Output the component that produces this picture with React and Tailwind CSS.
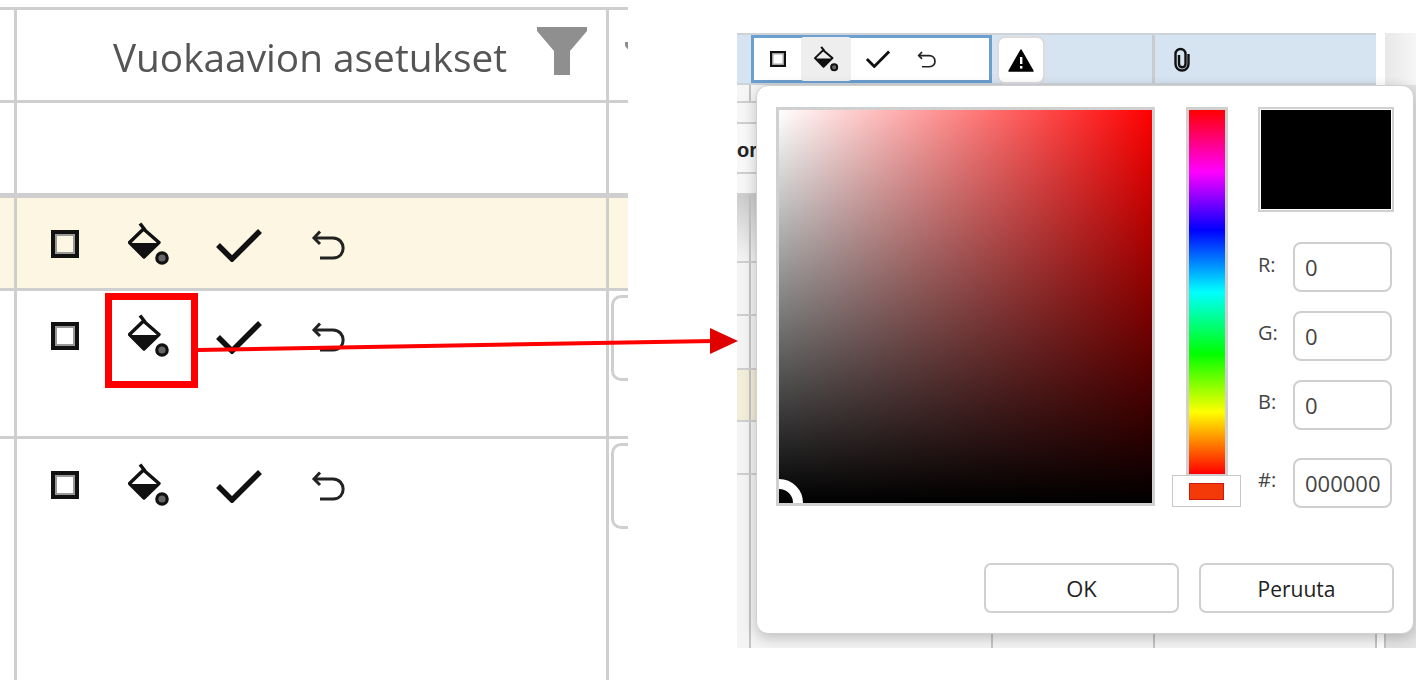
const lineCol = "border-[#cfcfcf]";

function SquareIcon({ className }) {
  return (
    <svg viewBox="0 0 28 28" className={className}>
      <rect x="2" y="2" width="24" height="24" fill="none" stroke="#111" strokeWidth="4" />
      <rect x="5" y="5" width="18" height="18" fill="none" stroke="#999" strokeWidth="2" />
    </svg>
  );
}

function BucketIcon({ className }) {
  return (
    <svg viewBox="0 0 42 44" className={className}>
      <path d="M12 1.5 L17 8" stroke="#111" strokeWidth="3.5" fill="none" />
      <path d="M15.5 7 L31 20.5 L16 35 L1.5 20.5 Z" fill="none" stroke="#111" strokeWidth="3.4" strokeLinejoin="round" />
      <path d="M3 21 H29.5 L16 34.5 Z" fill="#111" />
      <circle cx="34" cy="36" r="5.2" fill="#666" stroke="#111" strokeWidth="3.2" />
    </svg>
  );
}

function CheckIcon({ className }) {
  return (
    <svg viewBox="0 0 46 34" className={className}>
      <path d="M2 17 L16 31 L44 3" fill="none" stroke="#111" strokeWidth="5.5" />
    </svg>
  );
}

function UndoIcon({ className }) {
  return (
    <svg viewBox="0 0 34 30" className={className}>
      <path d="M3 8 H22 C35 8 36 28 22 28 H9" fill="none" stroke="#222" strokeWidth="3" />
      <path d="M9 1.5 L3 8 L9 14" fill="none" stroke="#222" strokeWidth="3" />
    </svg>
  );
}

function FunnelIcon({ className }) {
  return (
    <svg viewBox="0 0 50 48" className={className}>
      <path d="M0 0 H50 V4 L33 24 V48 H17 V24 L0 4 Z" fill="#8f8f8f" />
    </svg>
  );
}

function LargeTools({ pt }) {
  return (
    <div className={`flex items-start ${pt}`}>
      <SquareIcon className="ml-[34px] mt-[8px] h-[28px] w-[28px] blur-[0.4px]" />
      <BucketIcon className="ml-[49px] h-[44px] w-[42px] blur-[0.4px]" />
      <CheckIcon className="ml-[46px] mt-[6px] h-[34px] w-[46px] blur-[0.3px]" />
      <UndoIcon className="ml-[49px] mt-[8px] h-[30px] w-[34px] blur-[0.3px]" />
    </div>
  );
}

function LeftTable() {
  return (
    <div className="flex h-[680px] w-[628px] flex-none flex-col overflow-hidden bg-white pt-[7px]">
      <div className={`flex h-[96px] flex-none border-y-[3px] ${lineCol}`}>
        <div className={`w-[17px] flex-none border-r-[3px] ${lineCol}`} />
        <div className={`flex w-[592px] flex-none items-center justify-end border-r-[3px] pr-[19px] ${lineCol}`}>
          <span className="mt-[5px] text-[38.8px] leading-none text-[#555555] [font-family:'Open_Sans',sans-serif] blur-[0.4px]">Vuokaavion asetukset</span>
          <FunnelIcon className="mb-[8px] ml-[30px] h-[48px] w-[50px] blur-[0.4px]" />
        </div>
        <div className="flex-1 overflow-hidden pl-[16px] pt-[32px]">
          <FunnelIcon className="h-[48px] w-[50px]" />
        </div>
      </div>
      <div className={`flex h-[95px] flex-none border-b-[5px] ${lineCol}`}>
        <div className={`w-[17px] flex-none border-r-[3px] ${lineCol}`} />
        <div className={`w-[592px] flex-none border-r-[3px] ${lineCol}`} />
      </div>
      <div className={`flex h-[93px] flex-none border-b-[3px] bg-[#fdf6e3] ${lineCol}`}>
        <div className={`w-[17px] flex-none border-r-[3px] ${lineCol}`} />
        <div className={`w-[592px] flex-none border-r-[3px] ${lineCol}`}>
          <LargeTools pt="pt-[24px]" />
        </div>
      </div>
      <div className={`flex h-[148px] flex-none border-b-[3px] ${lineCol}`}>
        <div className={`w-[17px] flex-none border-r-[3px] ${lineCol}`} />
        <div className={`w-[592px] flex-none border-r-[3px] ${lineCol}`}>
          <LargeTools pt="pt-[23px]" />
        </div>
        <div className="flex-1 pl-[2px] pt-[4px]">
          <div className={`h-[86px] w-[40px] rounded-l-[10px] border-[3px] ${lineCol}`} />
        </div>
      </div>
      <div className="flex flex-1">
        <div className={`w-[17px] flex-none border-r-[3px] ${lineCol}`} />
        <div className={`w-[592px] flex-none border-r-[3px] ${lineCol}`}>
          <LargeTools pt="pt-[24px]" />
        </div>
        <div className="flex-1 pl-[2px] pt-[4px]">
          <div className={`h-[86px] w-[40px] rounded-l-[10px] border-[3px] ${lineCol}`} />
        </div>
      </div>
    </div>
  );
}

function Field({ label, value, mt, pt }) {
  return (
    <div className={`flex items-start ${mt}`}>
      <span className={`w-[35px] text-[20px] leading-[28px] text-[#444] [font-family:'Open_Sans',sans-serif] ${pt}`}>{label}</span>
      <div className="flex h-[50px] w-[99px] items-center rounded-[8px] border-2 border-[#cfcfcf] pl-[10px] text-[22px] text-[#444] [font-family:'Open_Sans',sans-serif]">
        {value}
      </div>
    </div>
  );
}

function ColorPopup() {
  return (
    <div className="absolute left-[19px] top-[52px] flex h-[549px] w-[658px] flex-col rounded-[12px] border border-[#d0d0d0] bg-white px-[19px] pt-[21px] shadow-[0_4px_14px_rgba(0,0,0,0.22)]">
      <div className="flex items-start">
        <div className="relative h-[399px] w-[379px] flex-none overflow-hidden border-[3px] border-[#d0d0d0]">
          <div className="absolute inset-0 bg-[linear-gradient(to_right,#fff,#f00)]" />
          <div className="absolute inset-0 bg-[linear-gradient(to_bottom,rgba(0,0,0,0),#000)]" />
          <div className="absolute bottom-[-24px] left-[-24px] h-[48px] w-[48px] rounded-full border-[10px] border-white" />
        </div>
        <div className="relative ml-[17px] flex h-[400px] w-[69px] flex-none justify-center">
          <div className="h-[370px] w-[42px] border-[3px] border-[#d0d0d0] bg-[linear-gradient(to_bottom,#f00,#f0f_17%,#00f_33%,#0ff_50%,#0f0_67%,#ff0_83%,#f00)]" />
          <div className="absolute bottom-0 left-0 flex h-[32px] w-[69px] items-center justify-center border border-[#c8c8c8] bg-white">
            <div className="h-[17px] w-[35px] border border-[#cc1a10] bg-[#f53a0a]" />
          </div>
        </div>
        <div className="ml-[17px] flex w-[134px] flex-none flex-col">
          <div className="h-[105px] w-[136px] border-2 border-[#d0d0d0] bg-white p-[1px]">
            <div className="h-full w-full bg-black" />
          </div>
          <Field label="R:" value="0" mt="mt-[30px]" pt="pt-[9px]" />
          <Field label="G:" value="0" mt="mt-[19px]" pt="pt-[8px]" />
          <Field label="B:" value="0" mt="mt-[19px]" pt="pt-[8px]" />
          <Field label="#:" value="000000" mt="mt-[28px]" pt="pt-[8px]" />
        </div>
      </div>
      <div className="mt-[55px] flex justify-end gap-[20px]">
        <div className="flex h-[50px] w-[195px] items-center justify-center rounded-[7px] border-2 border-[#d0d0d0] text-[22px] text-[#222] [font-family:'Open_Sans',sans-serif]">OK</div>
        <div className="flex h-[50px] w-[195px] items-center justify-center rounded-[7px] border-2 border-[#d0d0d0] pt-[4px] text-[21px] text-[#222] [font-family:'Open_Sans',sans-serif]">Peruuta</div>
      </div>
    </div>
  );
}

function StripRow({ h, line, bg, children }) {
  return (
    <div className={`flex flex-none border-b-2 border-[#cfcfcf] ${h} ${bg}`}>
      {line ? <div className="w-[14px] flex-none border-r-2 border-[#c4c4c4]" /> : children}
    </div>
  );
}

function RightShot() {
  return (
    <div className="relative ml-[109px] mt-[33px] h-[615px] w-[679px] flex-none overflow-hidden bg-white">
      <div className="flex h-[52px] items-stretch">
        <div className="flex flex-1 border-y-2 border-[#cdd3d9] bg-[#d6e3f0]">
          <div className="w-[14px] flex-none" />
          <div className="flex w-[241px] flex-none items-center border-[3px] border-[#6a9fcf] bg-white pl-[16px]">
            <SquareIcon className="h-[16px] w-[16px]" />
            <div className="ml-[15px] flex h-[44px] w-[50px] items-center justify-center rounded-[3px] bg-[#eeeeee]">
              <BucketIcon className="h-[26px] w-[25px]" />
            </div>
            <CheckIcon className="ml-[14px] h-[18px] w-[26px]" />
            <UndoIcon className="ml-[26px] h-[19px] w-[19px]" />
          </div>
          <div className="ml-[5px] mt-[1px] flex h-[48px] w-[48px] flex-none items-center justify-center rounded-[8px] border-2 border-[#dcdcdc] bg-white">
            <svg viewBox="0 0 26 23" className="h-[23px] w-[26px]">
              <path d="M13 1 L25 22 H1 Z" fill="#000" stroke="#000" strokeWidth="1.5" strokeLinejoin="round" />
              <rect x="12" y="8" width="2.4" height="7" fill="#fff" />
              <rect x="12" y="17" width="2.4" height="2.6" fill="#fff" />
            </svg>
          </div>
          <div className="w-[110px] flex-none border-r-[3px] border-[#c8ccd0]" />
          <div className="flex flex-1 items-center pl-[18px]">
            <svg viewBox="0 0 18 25" className="h-[25px] w-[18px]">
              <path d="M15.5 7 V17 A6.5 6.5 0 0 1 2.5 17 V7 A5 5 0 0 1 12.5 7 V17 A3 3 0 0 1 6 17 V8" fill="none" stroke="#111" strokeWidth="2.4" />
            </svg>
          </div>
        </div>
        <div className="w-[9px] flex-none bg-white" />
        <div className="w-[31px] flex-none bg-[linear-gradient(to_right,#e8e8e8,#f6f6f6)]" />
      </div>
      <div className="flex h-[563px] bg-[#f4f4f4]">
        <div className="flex w-[19px] flex-none flex-col">
          <StripRow h="h-[18px]" line bg="bg-[#f6f6f6]" />
          <StripRow h="h-[21px]" bg="bg-[#f6f6f6]" />
          <StripRow h="h-[50px]" bg="bg-[#f8f8f8]">
            <span className="mt-[4px] self-center text-[20px] font-semibold leading-none text-[#222] [font-family:'Liberation_Sans',sans-serif]">or</span>
          </StripRow>
          <StripRow h="h-[21px]" bg="bg-[#f6f6f6]" />
          <StripRow h="h-[68px]" line bg="bg-[linear-gradient(to_bottom,#cccccc,#f4f4f4)]" />
          <StripRow h="h-[53px]" line bg="bg-[#f4f4f4]" />
          <StripRow h="h-[54px]" line bg="bg-[#f4f4f4]" />
          <StripRow h="h-[52px]" line bg="bg-[#f3eeda]" />
          <StripRow h="h-[53px]" line bg="bg-[#f4f4f4]" />
          <div className="flex flex-1">
            <div className="w-[14px] flex-none border-r-2 border-[#c4c4c4]" />
          </div>
        </div>
        <div className="w-[237px] flex-none border-r-2 border-[#c4c4c4]" />
        <div className="w-[162px] flex-none border-r-2 border-[#c4c4c4]" />
        <div className="w-[222px] flex-none border-r-2 border-[#c4c4c4]" />
        <div className="w-[9px] flex-none border-r-2 border-[#c4c4c4] bg-white" />
        <div className="flex-1 bg-[#e4e4e4]" />
      </div>
      <ColorPopup />
    </div>
  );
}

export default function App() {
  return (
    <div className="relative flex h-[680px] w-[1416px] items-start overflow-hidden bg-white">
      <LeftTable />
      <RightShot />
      <div className="absolute left-[105px] top-[293px] h-[95px] w-[93px] border-[7px] border-[#ff0000]" />
      <svg viewBox="0 0 1416 680" className="pointer-events-none absolute left-0 top-0 h-[680px] w-[1416px]">
        <path d="M198 350 L714 341" stroke="#ff0000" strokeWidth="4" fill="none" />
        <path d="M710 328 L738 341 L710 354 Z" fill="#e00000" />
      </svg>
    </div>
  );
}
